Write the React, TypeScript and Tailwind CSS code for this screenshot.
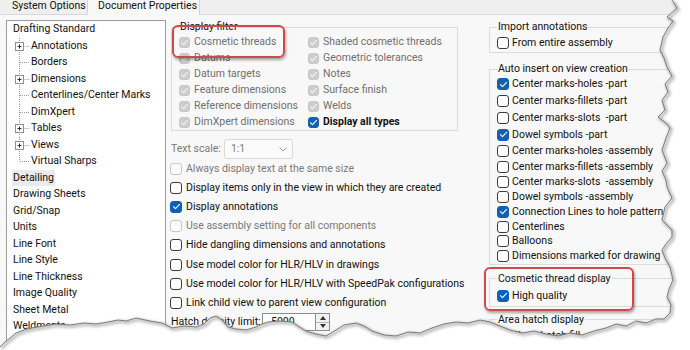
import React from 'react';

type CS = 'off' | 'on' | 'dis' | 'dison';

function Box({ s, small }: { s: CS; small?: boolean }) {
  const size = small ? 'w-[11px] h-[11px]' : 'w-[12px] h-[12px]';
  const look =
    s === 'on'
      ? 'bg-[#1060b9] border-[#1060b9]'
      : s === 'off'
      ? 'bg-white border-[#3c3c3c]'
      : s === 'dis'
      ? 'bg-[#fbfbfb] border-[#c8c8c8]'
      : 'bg-[#cdcdcd] border-[#c6c6c6]';
  return (
    <span className={`${size} ${look} border rounded-[3px] shrink-0 flex items-center justify-center`}>
      {(s === 'on' || s === 'dison') && (
        <svg viewBox="0 0 10 10" className="w-[9px] h-[9px]">
          <polyline
            points="1.6,5.2 3.9,7.4 8.4,2.6"
            fill="none"
            stroke={s === 'on' ? '#ffffff' : '#f3f3f3'}
            strokeWidth="1.25"
            strokeLinecap="round"
            strokeLinejoin="round"
          />
        </svg>
      )}
    </span>
  );
}

function CRow({
  s,
  label,
  h,
  small,
  gap = 'gap-[3px]',
  tone = 'text-[#111]',
  bold,
}: {
  s: CS;
  label: string;
  h: string;
  small?: boolean;
  gap?: string;
  tone?: string;
  bold?: boolean;
}) {
  return (
    <div className={`flex items-center whitespace-nowrap ${h} ${gap}`}>
      <Box s={s} small={small} />
      <span className={`${tone} ${bold ? 'font-bold' : ''}`}>{label}</span>
    </div>
  );
}

function Gutter({ k }: { k: 'plus' | 'leaf' | 'last' }) {
  return (
    <svg width="24" height="16.5" viewBox="0 0 24 16.5" className="shrink-0">
      <line x1="12.5" y1="0" x2="12.5" y2={k === 'last' ? 8.5 : 16.5} stroke="#9a9a9a" strokeDasharray="1 1" />
      <line x1={k === 'plus' ? 16.5 : 13} y1="8.5" x2="23" y2="8.5" stroke="#9a9a9a" strokeDasharray="1 1" />
      {k === 'plus' && (
        <>
          <rect x="8.5" y="4.5" width="8" height="8" fill="#ffffff" stroke="#8f8f8f" />
          <line x1="10.5" y1="8.5" x2="14.5" y2="8.5" stroke="#333" />
          <line x1="12.5" y1="6.5" x2="12.5" y2="10.5" stroke="#333" />
        </>
      )}
    </svg>
  );
}

type TI = { t: string; k: 'top' | 'plus' | 'leaf' | 'last'; sel?: boolean };
const tree: TI[] = [
  { t: 'Drafting Standard', k: 'top' },
  { t: 'Annotations', k: 'plus' },
  { t: 'Borders', k: 'leaf' },
  { t: 'Dimensions', k: 'plus' },
  { t: 'Centerlines/Center Marks', k: 'leaf' },
  { t: 'DimXpert', k: 'leaf' },
  { t: 'Tables', k: 'plus' },
  { t: 'Views', k: 'plus' },
  { t: 'Virtual Sharps', k: 'last' },
  { t: 'Detailing', k: 'top', sel: true },
  { t: 'Drawing Sheets', k: 'top' },
  { t: 'Grid/Snap', k: 'top' },
  { t: 'Units', k: 'top' },
  { t: 'Line Font', k: 'top' },
  { t: 'Line Style', k: 'top' },
  { t: 'Line Thickness', k: 'top' },
  { t: 'Image Quality', k: 'top' },
  { t: 'Sheet Metal', k: 'top' },
  { t: 'Weldments', k: 'top' },
];

const filterRows: [CS, string, CS, string, boolean?][] = [
  ['dison', 'Cosmetic threads', 'dison', 'Shaded cosmetic threads'],
  ['dison', 'Datums', 'dison', 'Geometric tolerances'],
  ['dison', 'Datum targets', 'dison', 'Notes'],
  ['dison', 'Feature dimensions', 'dison', 'Surface finish'],
  ['dison', 'Reference dimensions', 'dison', 'Welds'],
  ['dison', 'DimXpert dimensions', 'on', 'Display all types', true],
];

const midRows: [CS, string][] = [
  ['dis', 'Always display text at the same size'],
  ['off', 'Display items only in the view in which they are created'],
  ['on', 'Display annotations'],
  ['dis', 'Use assembly setting for all components'],
  ['off', 'Hide dangling dimensions and annotations'],
  ['off', 'Use model color for HLR/HLV in drawings'],
  ['off', 'Use model color for HLR/HLV with SpeedPak configurations'],
  ['off', 'Link child view to parent view configuration'],
];

const autoRows: [CS, string, string][] = [
  ['on', 'Center marks-holes -part', 'h-[17px]'],
  ['off', 'Center marks-fillets -part', 'h-[16.5px]'],
  ['off', 'Center marks-slots \u00a0-part', 'h-[17px]'],
  ['on', 'Dowel symbols -part', 'h-[17px]'],
  ['off', 'Center marks-holes -assembly', 'h-[16px]'],
  ['off', 'Center marks-fillets -assembly', 'h-[15.5px]'],
  ['off', 'Center marks-slots \u00a0-assembly', 'h-[15px]'],
  ['off', 'Dowel symbols -assembly', 'h-[14.5px]'],
  ['on', 'Connection Lines to hole pattern', 'h-[15px]'],
  ['off', 'Centerlines', 'h-[15px]'],
  ['off', 'Balloons', 'h-[14.5px]'],
  ['off', 'Dimensions marked for drawing', 'h-[15px]'],
];

const edge: [number, number][] = [
  [672, 0], [677, 8], [667, 17], [673, 21], [668, 28], [663, 37], [660, 50], [664, 58], [667, 67],
  [672, 76], [665, 84], [668, 92], [662, 100], [665, 110], [658, 117], [667, 124], [670, 128],
  [666, 138], [662, 150], [667, 163], [662, 171], [666, 180], [667, 187], [672, 198], [665, 207],
  [662, 220], [672, 230], [672, 237], [666, 244], [662, 250], [665, 258], [670, 267], [673, 280],
  [669, 289], [667, 297], [671, 305], [670, 313], [664, 319], [656, 319], [646, 323], [636, 321],
  [626, 326], [616, 324], [606, 328], [594, 331], [582, 335], [570, 333], [558, 336], [546, 334],
  [534, 331], [522, 333], [510, 330], [500, 326], [490, 322], [480, 320], [468, 323], [456, 322],
  [444, 324], [432, 328], [420, 333], [408, 332], [396, 336], [384, 335], [372, 331], [364, 326],
  [356, 323], [344, 325], [336, 330], [326, 336], [316, 334], [306, 331], [298, 326], [292, 322],
  [280, 321], [268, 322], [262, 324], [256, 327], [246, 330], [236, 329], [228, 327], [222, 320],
  [216, 316], [210, 318], [204, 324], [196, 327], [184, 326], [172, 328], [162, 323], [150, 321],
  [136, 318], [126, 321], [118, 320], [108, 322], [96, 324], [84, 323], [70, 325], [56, 324],
  [44, 326], [32, 328], [24, 330], [16, 333], [10, 338], [5, 342], [0, 347],
];

function Torn() {
  const pts = edge.map(([x, y]) => `${x},${y}`).join(' ');
  const fill = `M690,0 L${edge.map(([x, y]) => `${x},${y}`).join(' L')} L0,350 L690,350 Z`;
  return (
    <svg className="absolute left-0 top-0 pointer-events-none" width="690" height="350" viewBox="0 0 690 350">
      <defs>
        <filter id="blur" x="-10%" y="-10%" width="120%" height="120%">
          <feGaussianBlur stdDeviation="1.4" />
        </filter>
      </defs>
      <path d={fill} fill="#ffffff" />
      <polyline points={pts} fill="none" stroke="#777777" strokeWidth="2.5" opacity="0.6" filter="url(#blur)" transform="translate(1.5,1.5)" />
      <polyline points={pts} fill="none" stroke="#6f6f6f" strokeWidth="0.9" />
    </svg>
  );
}

export default function App() {
  return (
    <div className="relative w-[690px] h-[350px] overflow-hidden bg-[#f8f8f8] font-['Roboto',sans-serif] text-[10.5px] text-[#111]">
      {/* tab strip */}
      <div className="flex h-[15px] bg-[#efefef] border-b border-[#d9d9d9]">
        <div className="ml-[4px] w-[84px] pl-[8px] leading-[11px] whitespace-nowrap border-r border-[#d4d4d4]">System Options</div>
        <div className="w-[112px] h-[15px] pl-[10px] leading-[11px] whitespace-nowrap bg-[#f8f8f8] border-r border-[#d4d4d4]">
          Document Properties
        </div>
      </div>

      <div className="flex items-start">
        {/* tree */}
        <div className="ml-[6px] mt-[5px] w-[160px] h-[340px] shrink-0 bg-white border border-[#9c9c9c] pl-[6px]">
          {tree.map((it) =>
            it.k === 'top' ? (
              <div key={it.t} className="h-[16.5px] flex items-center whitespace-nowrap">
                <span className={it.sel ? 'bg-[#ebebeb] -ml-[1px] px-[1px]' : ''}>{it.t}</span>
              </div>
            ) : (
              <div key={it.t} className="h-[16.5px] flex items-center -ml-[6px] whitespace-nowrap">
                <Gutter k={it.k} />
                <span>{it.t}</span>
              </div>
            )
          )}
        </div>

        {/* middle column */}
        <div className="ml-[4px] mt-[6px] w-[312px] shrink-0 flex flex-col">
          <fieldset className="ml-[1px] w-[287px] border border-[#dcdcdc] pl-[7px] pt-[1px]">
            <legend className="px-[1px] leading-[12px]">Display filter</legend>
            <div className="grid grid-cols-[129px_1fr]">
              {filterRows.map(([s1, l1, s2, l2, b]) => (
                <React.Fragment key={l1}>
                  <CRow s={s1} label={l1} h="h-[16px]" small gap="gap-[4px]" tone="text-[#6f6f6f]" />
                  <CRow
                    s={s2}
                    label={l2}
                    h="h-[16px]"
                    small
                    gap="gap-[4px]"
                    tone={b ? 'text-[#111]' : 'text-[#6f6f6f]'}
                    bold={b}
                  />
                </React.Fragment>
              ))}
            </div>
          </fieldset>

          <div className="mt-[8px] h-[20px] flex items-center ml-[1px]">
            <span className="text-[#7a7a7a]">Text scale:</span>
            <div className="ml-[3px] w-[69px] h-[20px] border border-[#d9d9d9] rounded-[3px] bg-[#fbfbfb] flex items-center justify-between pl-[6px] pr-[5px] text-[#7a7a7a]">
              <span>1:1</span>
              <svg width="8" height="5" viewBox="0 0 8 5">
                <polyline points="0.5,0.5 4,4 7.5,0.5" fill="none" stroke="#9a9a9a" strokeWidth="1" />
              </svg>
            </div>
          </div>

          {midRows.map(([s, l]) => (
            <CRow
              key={l}
              s={s}
              label={l}
              h="h-[19.2px]"
              gap="gap-[4px]"
              tone={s === 'dis' ? 'text-[#7a7a7a]' : 'text-[#111]'}
            />
          ))}

          <div className="h-[19.2px] flex items-center ml-[1px] whitespace-nowrap">
            <span className="w-[91px]">Hatch density limit:</span>
            <div className="w-[54px] h-[18px] border border-[#8e8e8e] bg-white flex items-center pl-[8px]">5000</div>
            <div className="w-[14px] h-[18px] border border-l-0 border-[#8e8e8e] bg-[#f2f2f2] flex flex-col">
              <div className="flex-1 flex items-center justify-center border-b border-[#b5b5b5]">
                <svg width="6" height="4" viewBox="0 0 6 4"><polygon points="0,4 3,0 6,4" fill="#333" /></svg>
              </div>
              <div className="flex-1 flex items-center justify-center">
                <svg width="6" height="4" viewBox="0 0 6 4"><polygon points="0,0 6,0 3,4" fill="#333" /></svg>
              </div>
            </div>
          </div>
        </div>

        {/* right column */}
        <div className="ml-[7px] mt-[6px] flex flex-col">
          <fieldset className="w-[192px] border border-[#dcdcdc] pl-[7px] pt-[2px] pb-[1px]">
            <legend className="px-[1px] leading-[12px]">Import annotations</legend>
            <CRow s="off" label="From entire assembly" h="h-[16px]" />
          </fieldset>

          <fieldset className="mt-[10px] w-[192px] border border-[#dcdcdc] pl-[7px] pt-[0.5px]">
            <legend className="px-[1px] leading-[12px]">Auto insert on view creation</legend>
            {autoRows.map(([s, l, h]) => (
              <CRow key={l} s={s} label={l} h={h} />
            ))}
          </fieldset>

          <fieldset className="mt-[8px] w-[192px] border border-[#dcdcdc] pl-[7px] pt-[3px] pb-[2px]">
            <legend className="px-[1px] leading-[12px]">Cosmetic thread display</legend>
            <CRow s="on" label="High quality" h="h-[16px]" />
          </fieldset>

          <fieldset className="mt-[7px] w-[192px] border border-[#dcdcdc] pl-[7px] pt-[2px] pb-[2px]">
            <legend className="px-[1px] leading-[12px]">Area hatch display</legend>
            <CRow s="on" label="Show hatch fill" h="h-[16px]" />
          </fieldset>
        </div>
      </div>

      {/* highlight boxes */}
      <div className="absolute left-[172px] top-[25px] w-[113px] h-[33px] rounded-[6px] border-[2.5px] border-[#cc4a4d] shadow-[1px_2px_3px_rgba(0,0,0,0.35)]" />
      <div className="absolute left-[484px] top-[267px] w-[150px] h-[44px] rounded-[6px] border-[2.5px] border-[#cc4a4d] shadow-[1px_2px_3px_rgba(0,0,0,0.35)]" />

      <Torn />
    </div>
  );
}
